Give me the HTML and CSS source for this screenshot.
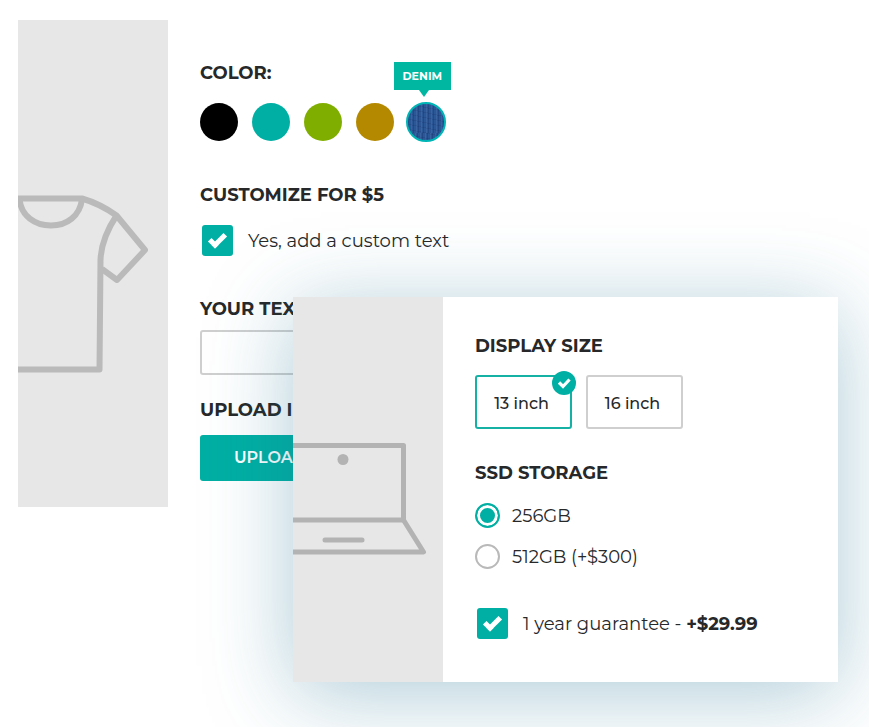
FILE: index.html
```html
<!DOCTYPE html>
<html lang="en">

<head>
    <meta charset="UTF-8">
    <meta name="viewport" content="width=device-width, initial-scale=1.0">
    <title>Product options</title>
    <link rel="stylesheet" href="styles.css">
</head>

<body>
    <main class="main">
        <section class="card shirt-card">
            <div class="picture shirt-picture">
                <svg viewBox="0 0 150 180" aria-hidden="true">
                    <g fill="none" stroke="#bababa" stroke-width="6" stroke-linejoin="round">
                        <path d="M-4 4.5H64C76 8 88 14 98.500 21.500L127 56L99 86L84 75" />
                        <path d="M98.500 21.500C89 36 83 52 82.500 66L81.500 175.500H-4" />
                        <path d="M1.500 5C3 22 17 31.500 33 31.500S62 22 64 5" />
                    </g>
                </svg>
            </div>
            <form class="options">
                <h2>COLOR:</h2>
                <div class="swatches">
                    <input type="radio" name="color" class="swatch black" aria-label="Black">
                    <input type="radio" name="color" class="swatch teal" aria-label="Teal">
                    <input type="radio" name="color" class="swatch green" aria-label="Green">
                    <input type="radio" name="color" class="swatch gold" aria-label="Gold">
                    <div class="picked">
                        <label for="denim" class="tooltip">DENIM</label>
                        <input type="radio" name="color" id="denim" class="swatch denim" checked>
                    </div>
                </div>

                <h2>CUSTOMIZE FOR $5</h2>
                <label class="check-row">
                    <input type="checkbox" class="check" checked>
                    <span>Yes, add a custom text</span>
                </label>

                <h2 class="text-title"><label for="yourText">YOUR TEXT</label></h2>
                <input type="text" id="yourText" class="text-box">

                <h2 class="upload-title">UPLOAD IMAGE</h2>
                <button type="button" class="upload">UPLOAD</button>
            </form>
        </section>

        <section class="card laptop-card">
            <div class="picture laptop-picture">
                <svg viewBox="0 0 150 114" aria-hidden="true">
                    <g fill="none" stroke="#b3b3b3" stroke-width="5" stroke-linejoin="round">
                        <path d="M-4 3.500H110.500V78H-4" />
                        <path d="M110.500 78L130.500 110H-4" />
                        <path d="M32 98H69" stroke-linecap="round" />
                    </g>
                    <circle cx="50" cy="17.500" r="5.500" fill="#b3b3b3" />
                </svg>
            </div>
            <form class="options">
                <h2 class="size-title">DISPLAY SIZE</h2>
                <div class="sizes">
                    <button type="button" class="size selected" aria-pressed="true">13 inch
                        <svg class="badge" viewBox="0 0 24 24" aria-hidden="true">
                            <circle cx="12" cy="12" r="12" fill="#00afa3" />
                            <path d="M7 11.500L11 15.500L17.500 8.500" fill="none" stroke="#fff" stroke-width="3.200" />
                        </svg>
                    </button>
                    <button type="button" class="size" aria-pressed="false">16 inch</button>
                </div>

                <h2>SSD STORAGE</h2>
                <div class="storage">
                    <label class="radio-row">
                        <input type="radio" name="storage" class="radio" checked>
                        <span>256GB</span>
                    </label>
                    <label class="radio-row">
                        <input type="radio" name="storage" class="radio">
                        <span>512GB (+$300)</span>
                    </label>
                </div>

                <label class="check-row">
                    <input type="checkbox" class="check" checked>
                    <span>1 year guarantee - <b>+$29.99</b></span>
                </label>
            </form>
        </section>
    </main>
</body>

</html>
```
FILE: styles.css
```css
* {
    box-sizing: border-box;
}

body {
    margin: 0;
    background-color: white;
    color: #262829;
    font-family: Montserrat, Inter, sans-serif;
    font-size: 18px;
    line-height: 24px;
    overflow-x: hidden;
}

/* the laptop card lies over the lower right part of the shirt card */
.main {
    display: grid;
    grid-template-columns: 275fr 268fr 277fr;
    padding: 20px 31px 45px 18px;
}

.card {
    display: flex;
    grid-row: 1;
    background-color: white;
}

.shirt-card {
    grid-column: 1 / 3;
    align-self: start;
}

.laptop-card {
    grid-column: 2 / 4;
    margin-top: 277px;
    z-index: 1;
    box-shadow: 0 12px 80px rgba(30, 115, 145, 0.36);
}

.picture {
    display: flex;
    align-items: center;
    flex: 0 0 150px;
    background-color: #e7e7e7;
}

.picture svg {
    width: 100%;
}

.shirt-picture {
    padding-top: 41px;
}

.laptop-picture {
    padding-top: 18px;
}

.options {
    flex: 1;
    padding: 41px 32px 26px;
}

.laptop-card .options {
    padding: 37px 32px 43px;
}

h2 {
    margin: 0 0 18px;
    font-size: 18px;
    font-weight: 700;
    white-space: nowrap;
}

.swatches {
    display: flex;
    align-items: center;
    gap: 14px;
    height: 38px;
    margin-bottom: 42px;
}

.swatch {
    appearance: none;
    display: block;
    width: 38px;
    height: 38px;
    margin: 0;
    border-radius: 50%;
}

.black {
    background-color: black;
}

.teal {
    background-color: #00afa3;
}

.green {
    background-color: #80ae00;
}

.gold {
    background-color: #b48900;
}

.denim {
    width: 40px;
    height: 40px;
    border: 2px solid #00b5b5;
    background:
        repeating-linear-gradient(91deg, rgba(15, 40, 95, 0.3) 0 1px, transparent 1px 3px, rgba(110, 150, 200, 0.2) 3px 4px, transparent 4px 5px),
        repeating-linear-gradient(12deg, rgba(20, 45, 95, 0.2) 0 1px, transparent 1px 5px),
        #2c5796;
}

.picked {
    position: relative;
    margin: 0 -2px;
}

.tooltip {
    position: absolute;
    right: -5px;
    bottom: 52px;
    padding: 2px 9px;
    background-color: #00b8a2;
    color: white;
    font-size: 11px;
    font-weight: 700;
}

.tooltip::after {
    content: "";
    position: absolute;
    top: 100%;
    right: 22px;
    border: 5px solid transparent;
    border-top: 7px solid #00b8a2;
    border-bottom: 0;
}

.check-row {
    display: flex;
    align-items: center;
    gap: 15px;
    padding-left: 2px;
    white-space: nowrap;
}

.shirt-card .check-row {
    margin-bottom: 41px;
}

.check {
    appearance: none;
    display: flex;
    justify-content: center;
    width: 31px;
    height: 31px;
    margin: 0;
    border-radius: 3px;
    background-color: #00afa3;
}

.check:checked::before {
    content: "";
    width: 12px;
    height: 5px;
    margin-top: 9px;
    border: solid white;
    border-width: 0 0 5px 5px;
    transform: rotate(-45deg);
}

.text-title {
    margin-bottom: 9px;
}

.upload-title {
    margin-bottom: 13px;
}

.text-box {
    display: block;
    width: 100%;
    height: 45px;
    margin-bottom: 23px;
    border: 2px solid #cfcfcf;
    border-radius: 3px;
    font: inherit;
}

.upload {
    display: block;
    padding: 11px 34px;
    border: none;
    border-radius: 3px;
    background-color: #00afa3;
    color: white;
    font: inherit;
    font-size: 16px;
    font-weight: 600;
}

.size-title {
    margin-bottom: 17px;
}

.sizes {
    display: flex;
    gap: 14px;
    margin-bottom: 32px;
}

.size {
    position: relative;
    width: 97px;
    height: 54px;
    padding: 4px 4px 0 0;
    border: 2px solid #cfcfcf;
    border-radius: 3px;
    background-color: white;
    color: inherit;
    font: inherit;
    font-size: 16px;
    font-weight: 500;
}

.selected {
    border-color: #16b1a5;
}

.badge {
    position: absolute;
    top: -6px;
    right: -6px;
    width: 24px;
    height: 24px;
}

.storage {
    display: flex;
    flex-direction: column;
    gap: 16px;
    margin-bottom: 39px;
}

.radio-row {
    display: flex;
    align-items: center;
    gap: 12px;
}

.radio {
    appearance: none;
    width: 25px;
    height: 25px;
    margin: 0;
    border: 2px solid #b9b9b9;
    border-radius: 50%;
}

.radio:checked {
    border-color: #00afa3;
    background-color: #00afa3;
    box-shadow: inset 0 0 0 3px white;
}
```
